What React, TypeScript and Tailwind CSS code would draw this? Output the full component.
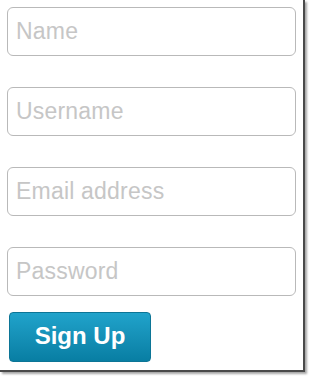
import React from 'react';

const fields = ['Name', 'Username', 'Email address', 'Password'];

export default function App() {
  return (
    <div className="h-[376px] w-[310px] bg-white font-['Liberation_Sans',Arial,sans-serif]">
      {/* Window frame with its shadow */}
      <div className="h-[372px] w-[305px] border-r-2 border-b-2 border-[#4a4a4a] bg-white shadow-[2px_2px_2px_rgba(0,0,0,0.35)]">
        <form className="flex flex-col pl-[7px] pt-[7px]">
          <div className="flex flex-col gap-[31px]">
            {fields.map((f) => (
              <input
                key={f}
                type={f === 'Password' ? 'password' : 'text'}
                placeholder={f}
                className="h-[49px] w-[289px] rounded-[6px] border border-[#b9b9b9] bg-white px-2 text-[23px] tracking-[0.2px] text-[#555] outline-none placeholder:text-[#c6c6c6]"
              />
            ))}
          </div>
          <button
            type="button"
            className="mt-[16px] ml-[2px] h-[50px] w-[142px] rounded-[4px] border border-[#0c7596] bg-gradient-to-b from-[#20a3cb] to-[#087ea3] pb-[2px] text-[24px] font-bold text-white"
          >
            Sign Up
          </button>
        </form>
      </div>
    </div>
  );
}
